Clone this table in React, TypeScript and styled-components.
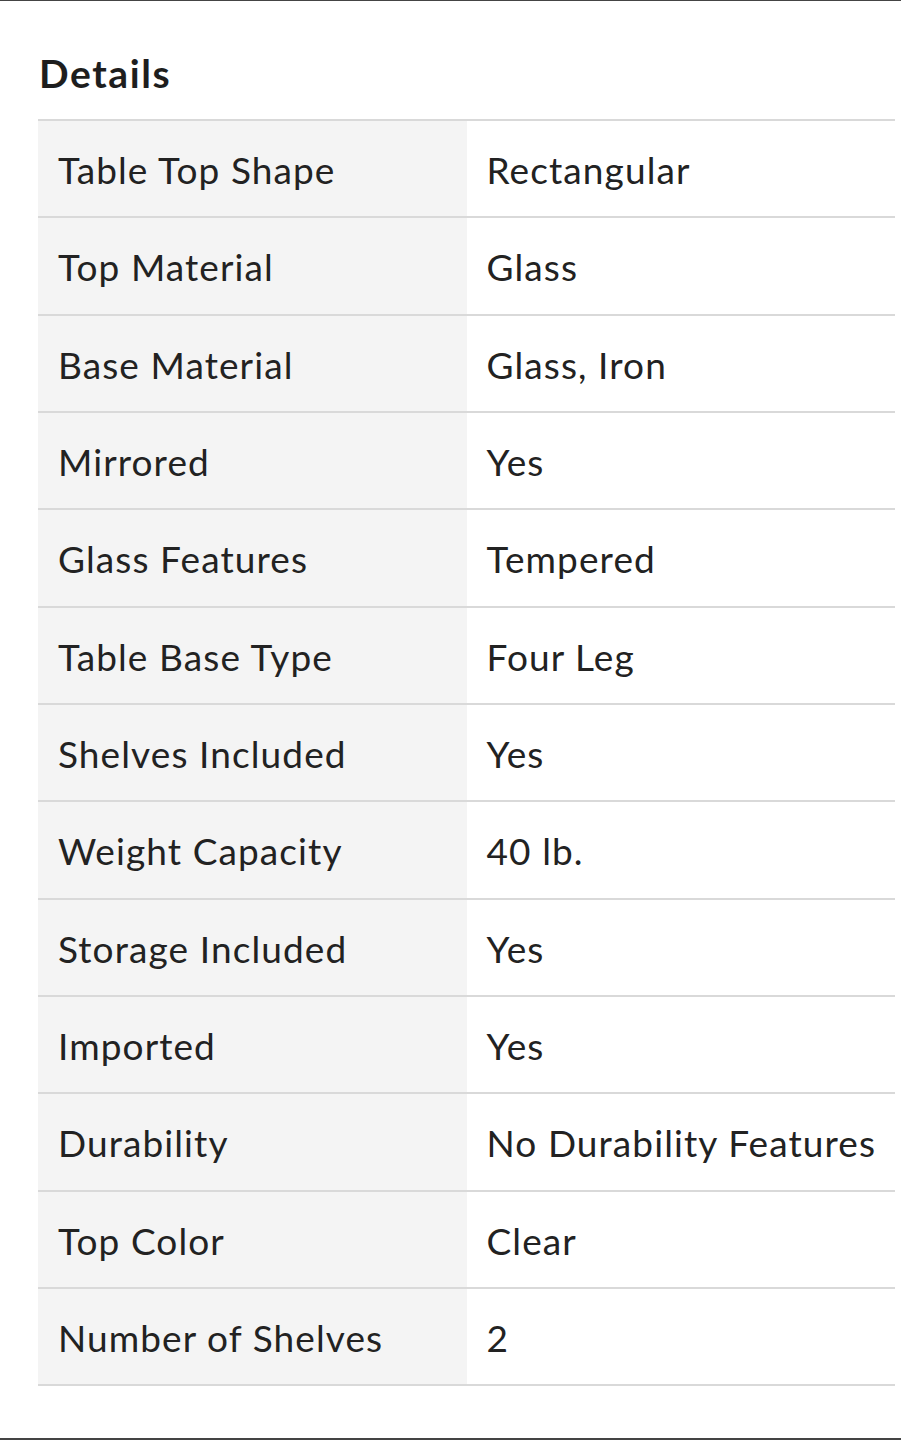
import React from "react";
import styled, { createGlobalStyle } from "styled-components";

const GlobalStyle = createGlobalStyle`
  html, body { margin: 0; padding: 0; background: #ffffff; }
  body { font-family: Lato, "Noto Sans", sans-serif; color: #222222; }
`;

const Page = styled.div`
  box-sizing: border-box;
  height: 1440px;
  border-top: 1px solid #444444;
  border-bottom: 2px solid #444444;
  padding: 0 6px 0 38px;
  display: flex;
  flex-direction: column;
`;

const Heading = styled.h2`
  flex-shrink: 0;
  margin: 0;
  padding: 46px 0 0 1px;
  height: 118px;
  box-sizing: border-box;
  font-family: Lato, "Noto Sans", sans-serif;
  font-weight: 700;
  font-size: 39px;
  line-height: 52px;
  letter-spacing: 1.6px;
  color: #1e1e1e;
`;

const Table = styled.div`
  flex-shrink: 0;
  display: flex;
  flex-direction: column;
  border-top: 2px solid #d9d9d9;
`;

const Row = styled.div`
  box-sizing: border-box;
  height: 97.33px;
  display: grid;
  grid-template-columns: 1fr 1fr;
  border-bottom: 2px solid #d9d9d9;
`;

const Cell = styled.div<{ $label?: boolean }>`
  display: flex;
  align-items: center;
  padding: 2px 0 0 20px;
  background: ${(p) => (p.$label ? "#f4f4f4" : "#ffffff")};
  font-size: 37px;
  letter-spacing: 1.1px;
  color: #222222;
  white-space: nowrap;
`;

const rows: [string, string][] = [
  ["Table Top Shape", "Rectangular"],
  ["Top Material", "Glass"],
  ["Base Material", "Glass, Iron"],
  ["Mirrored", "Yes"],
  ["Glass Features", "Tempered"],
  ["Table Base Type", "Four Leg"],
  ["Shelves Included", "Yes"],
  ["Weight Capacity", "40 lb."],
  ["Storage Included", "Yes"],
  ["Imported", "Yes"],
  ["Durability", "No Durability Features"],
  ["Top Color", "Clear"],
  ["Number of Shelves", "2"],
];

export default function App() {
  return (
    <>
      <GlobalStyle />
      <Page>
        <Heading>Details</Heading>
        <Table>
          {rows.map(([k, v]) => (
            <Row key={k}>
              <Cell $label>{k}</Cell>
              <Cell>{v}</Cell>
            </Row>
          ))}
        </Table>
      </Page>
    </>
  );
}
